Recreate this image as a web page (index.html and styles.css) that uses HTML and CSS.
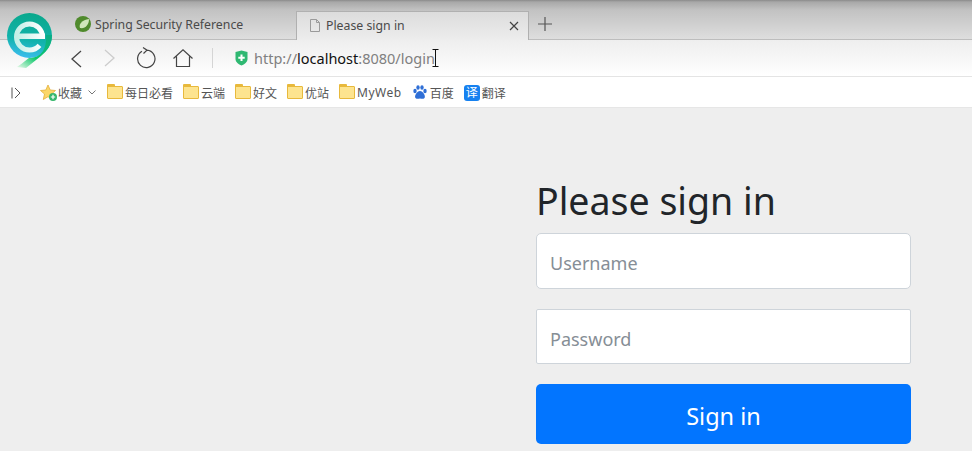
FILE: index.html
```html
<!DOCTYPE html>
<html lang="zh">
<head>
<meta charset="utf-8">
<title>Please sign in</title>
<link rel="stylesheet" href="styles.css">
</head>
<body>
<svg class="logo" width="56" height="70" viewBox="0 0 56 70">
  <defs>
    <linearGradient id="lg1" x1="0.5" y1="0" x2="0.35" y2="1">
      <stop offset="0" stop-color="#0aa88c"/>
      <stop offset="0.6" stop-color="#12b3ac"/>
      <stop offset="1" stop-color="#3dbdf0"/>
    </linearGradient>
    <linearGradient id="lg2" x1="0.8" y1="0" x2="0.1" y2="1">
      <stop offset="0" stop-color="#0bae84"/>
      <stop offset="0.6" stop-color="#0fc76c"/>
      <stop offset="1" stop-color="#d5f5de"/>
    </linearGradient>
    <linearGradient id="lg3" x1="0" y1="0" x2="1" y2="0">
      <stop offset="0" stop-color="#c3efe7"/>
      <stop offset="1" stop-color="#ffffff"/>
    </linearGradient>
  </defs>
  <circle cx="29.500" cy="35.500" r="22.500" fill="url(#lg1)"/>
  <path d="M52 35C52 45 47 51 41 56L26 68L17 67C23 63 26 60 29 58C42 58 47 48 46 35Z" fill="url(#lg2)"/>
  <circle cx="29.500" cy="37" r="13" fill="none" stroke="url(#lg3)" stroke-width="5" stroke-dasharray="72.700 9" stroke-dashoffset="-9"/>
  <rect x="17" y="33.500" width="28" height="5.500" fill="url(#lg3)"/>
</svg>

<header class="browser">
  <div class="tabstrip">
    <div class="tab">
      <svg class="fav" width="16" height="16" viewBox="0 0 16 16">
        <circle cx="8" cy="8" r="8" fill="#4f8a2c"/>
        <path d="M5 12C3.500 8 7 4 14 3C14 9 10 13 5 12Z" fill="#cfe6b8"/>
      </svg>
      <span>Spring Security Reference</span>
    </div>
    <div class="tab tab-active">
      <svg class="fav" width="14" height="15" viewBox="0 0 14 15">
        <path d="M2.500 1.500H8.500L11.500 4.500V13.500H2.500Z M8.500 1.500V4.500H11.500" fill="none" stroke="#9a9a9a"/>
      </svg>
      <span class="tab-title">Please sign in</span>
      <svg width="10" height="10" viewBox="0 0 10 10"><path d="M1 1L9 9M9 1L1 9" stroke="#444" stroke-width="1.200"/></svg>
    </div>
    <svg class="newtab" width="14" height="14" viewBox="0 0 14 14"><path d="M7 0V14M0 7H14" stroke="#555" stroke-width="1.200"/></svg>
  </div>

  <div class="toolbar">
    <svg class="nav back" width="14" height="18" viewBox="0 0 14 18"><path d="M12 1L3 9L12 17" fill="none" stroke="#444" stroke-width="1.300"/></svg>
    <svg class="nav fwd" width="14" height="18" viewBox="0 0 14 18"><path d="M2 1L11 9L2 17" fill="none" stroke="#ccc" stroke-width="1.300"/></svg>
    <svg class="nav reload" width="20" height="22" viewBox="0 0 20 22"><path d="M6 4.300A8.700 8.700 0 1 0 11 3.200M7 0.500L11 3.200L7.500 6.500" fill="none" stroke="#444" stroke-width="1.200"/></svg>
    <svg class="nav home" width="20" height="18" viewBox="0 0 20 18"><path d="M0.500 9.500L10 0.800L19.500 9.500M3.500 7.500V17.500H16.500V7.500" fill="none" stroke="#444" stroke-width="1.200"/></svg>
    <span class="sep"></span>
    <svg class="shield" width="15" height="16" viewBox="0 0 14 16">
      <path d="M1 2L7 0.500L13 2V9C13 12 10 14.500 7 15.500C4 14.500 1 12 1 9Z" fill="#2fb872"/>
      <path d="M7 4.500V11M3.800 7.800H10.200" stroke="#fff" stroke-width="2"/>
    </svg>
    <div class="url">http://<b>localhost</b>:8080/login</div>
    <svg class="caret" width="7" height="18" viewBox="0 0 7 18"><path d="M0.500 0.500H6.500M3.500 0.500V17.500M0.500 17.500H6.500" fill="none" stroke="#111"/></svg>
  </div>

  <nav class="bookmarks">
    <svg class="side" width="10" height="12" viewBox="0 0 10 12"><path d="M1 0.500V11.500M4 1L9 6L4 11" fill="none" stroke="#555"/></svg>
    <div class="bm bm-fav">
      <svg width="18" height="18" viewBox="0 0 18 18">
        <path d="M8 1L10.200 6L15.500 6.500L11.500 10L12.700 15.500L8 12.700L3.300 15.500L4.500 10L0.500 6.500L5.800 6Z" fill="#fbd768" stroke="#e3ae3a" stroke-width="0.800"/>
        <circle cx="13" cy="13" r="4" fill="#35b66b"/>
        <path d="M13 10.800V15.200M10.800 13H15.200" stroke="#fff" stroke-width="1.200"/>
      </svg>
      <span>收藏</span>
      <svg class="chev" width="8" height="5" viewBox="0 0 8 5"><path d="M0.500 0.500L4 4L7.500 0.500" fill="none" stroke="#777"/></svg>
    </div>
    <div class="bm bm-1"><span class="folder"></span><span>每日必看</span></div>
    <div class="bm bm-2"><span class="folder"></span><span>云端</span></div>
    <div class="bm bm-3"><span class="folder"></span><span>好文</span></div>
    <div class="bm bm-4"><span class="folder"></span><span>优站</span></div>
    <div class="bm bm-5"><span class="folder"></span><span class="bm-latin">MyWeb</span></div>
    <div class="bm bm-6">
      <svg width="14" height="15" viewBox="0 0 14 15" fill="#2f6fd6">
        <ellipse cx="2" cy="6" rx="1.700" ry="2.200"/>
        <ellipse cx="5" cy="2.500" rx="1.700" ry="2.300"/>
        <ellipse cx="9" cy="2.500" rx="1.700" ry="2.300"/>
        <ellipse cx="12" cy="6" rx="1.700" ry="2.200"/>
        <path d="M7 6C10 6 13 11 11.500 13C10 14.500 8.500 13.500 7 13.500C5.500 13.500 4 14.500 2.500 13C1 11 4 6 7 6Z"/>
      </svg>
      <span>百度</span>
    </div>
    <div class="bm bm-7"><span class="yi">译</span><span>翻译</span></div>
  </nav>
</header>

<main class="page">
  <form class="signin">
    <h2 class="heading">Please sign in</h2>
    <input class="field field-user" type="text" placeholder="Username">
    <input class="field field-pass" type="password" placeholder="Password">
    <button class="submit" type="button">Sign in</button>
  </form>
</main>
</body>
</html>
```
FILE: styles.css
```css
* { box-sizing: border-box; }
html, body { margin: 0; height: 451px; overflow: hidden; }
body {
  position: relative;
  width: 972px;
  background: #eee;
  font-family: "Noto Sans", "Noto Sans CJK SC", sans-serif;
  color: #444;
}
.logo { position: absolute; left: 0; top: 0; z-index: 2; }
.browser { height: 108px; display: flex; flex-direction: column; }

.tabstrip {
  height: 40px;
  display: flex;
  align-items: flex-end;
  padding-left: 65px;
  background: linear-gradient(#8a8a8a 0, #a8a8a8 2px, #c2c2c2 10px, #dedede 100%);
  border-bottom: 1px solid #bdbdbd;
  font-size: 12.300px;
}
.tab {
  width: 231px;
  height: 29px;
  display: flex;
  align-items: center;
  padding: 0 9px 1px 10px;
  gap: 4px;
  color: #4a4a4a;
}
.tab-active {
  width: 233px;
  height: 29px;
  margin-bottom: -1px;
  padding: 0 9px 1px 11px;
  gap: 4px;
  border: 1px solid #b0b0b0;
  border-bottom: 0;
  background: linear-gradient(#dcdcdc, #ededed);
}
.tab-title { flex: 1; }
.newtab { margin: 0 0 8px 9px; }

.toolbar {
  height: 37px;
  display: flex;
  align-items: center;
  background: linear-gradient(#eeeeee, #ffffff);
  border-bottom: 1px solid #e4e4e4;
  padding-left: 69px;
}
.back { margin-top: 1px; }
.fwd { margin-left: 20px; }
.reload { margin: 0 0 0 19px; }
.home { margin: 0 0 0 17px; }
.sep { width: 1px; height: 20px; background: #d5d5d5; margin-left: 19px; }
.shield { margin-left: 21px; }
.url {
  margin-left: 5px;
  font-size: 14.500px;
  color: #808080;
  white-space: nowrap;
}
.url b { font-weight: 400; color: #111; }
.caret { margin-left: -3px; }

.bookmarks {
  height: 31px;
  display: flex;
  align-items: center;
  padding: 1px 0 0 11px;
  background: #fff;
  border-bottom: 1px solid #e6e6e6;
  font-size: 12px;
  color: #555;
}
.side { margin-right: 19px; }
.bm { display: flex; align-items: center; gap: 2px; white-space: nowrap; }
.bm-fav { gap: 0; margin-right: 11px; }
.chev { margin-left: 6px; }
.bm-1, .bm-2, .bm-3, .bm-4 { margin-right: 10px; }
.bm-5 { margin-right: 11px; }
.bm-6 { margin-right: 10px; gap: 3px; }
.bm-latin { letter-spacing: 0.500px; }
.folder {
  position: relative;
  display: block;
  width: 16px;
  height: 13px;
  border: 1px solid #e8b93c;
  border-radius: 1px;
  background: #fde48f;
}
.folder::before {
  content: "";
  position: absolute;
  left: -1px;
  top: -3px;
  width: 8px;
  height: 3px;
  background: #e8b93c;
  border-radius: 1px 1px 0 0;
}
.yi {
  display: block;
  width: 16px;
  height: 16px;
  border-radius: 3px;
  background: #1681f0;
  color: #fff;
  font-size: 12px;
  line-height: 16px;
  text-align: center;
}

.page { height: 343px; padding: 70px 0 0 536px; }
.signin { width: 375px; display: flex; flex-direction: column; }
.heading {
  margin: 0 0 10px 0;
  height: 45px;
  font-size: 37.500px;
  line-height: 45px;
  font-weight: 400;
  color: #212529;
  white-space: nowrap;
}
.field {
  display: block;
  width: 100%;
  padding: 4px 13px 0;
  background: #fff;
  border: 1px solid #ced4da;
  border-radius: 5px;
  font: inherit;
  font-size: 18px;
  color: #495057;
  outline: 0;
}
.field::placeholder { color: #868e96; opacity: 1; }
.field-user { height: 56px; margin-bottom: 20px; }
.field-pass { height: 55px; margin-bottom: 20px; border-radius: 2px; }
.submit {
  height: 60px;
  border: 0;
  border-radius: 5px;
  background: #0275ff;
  color: #fff;
  font: inherit;
  font-size: 23.500px;
  padding: 4px 0 0;
}
```
